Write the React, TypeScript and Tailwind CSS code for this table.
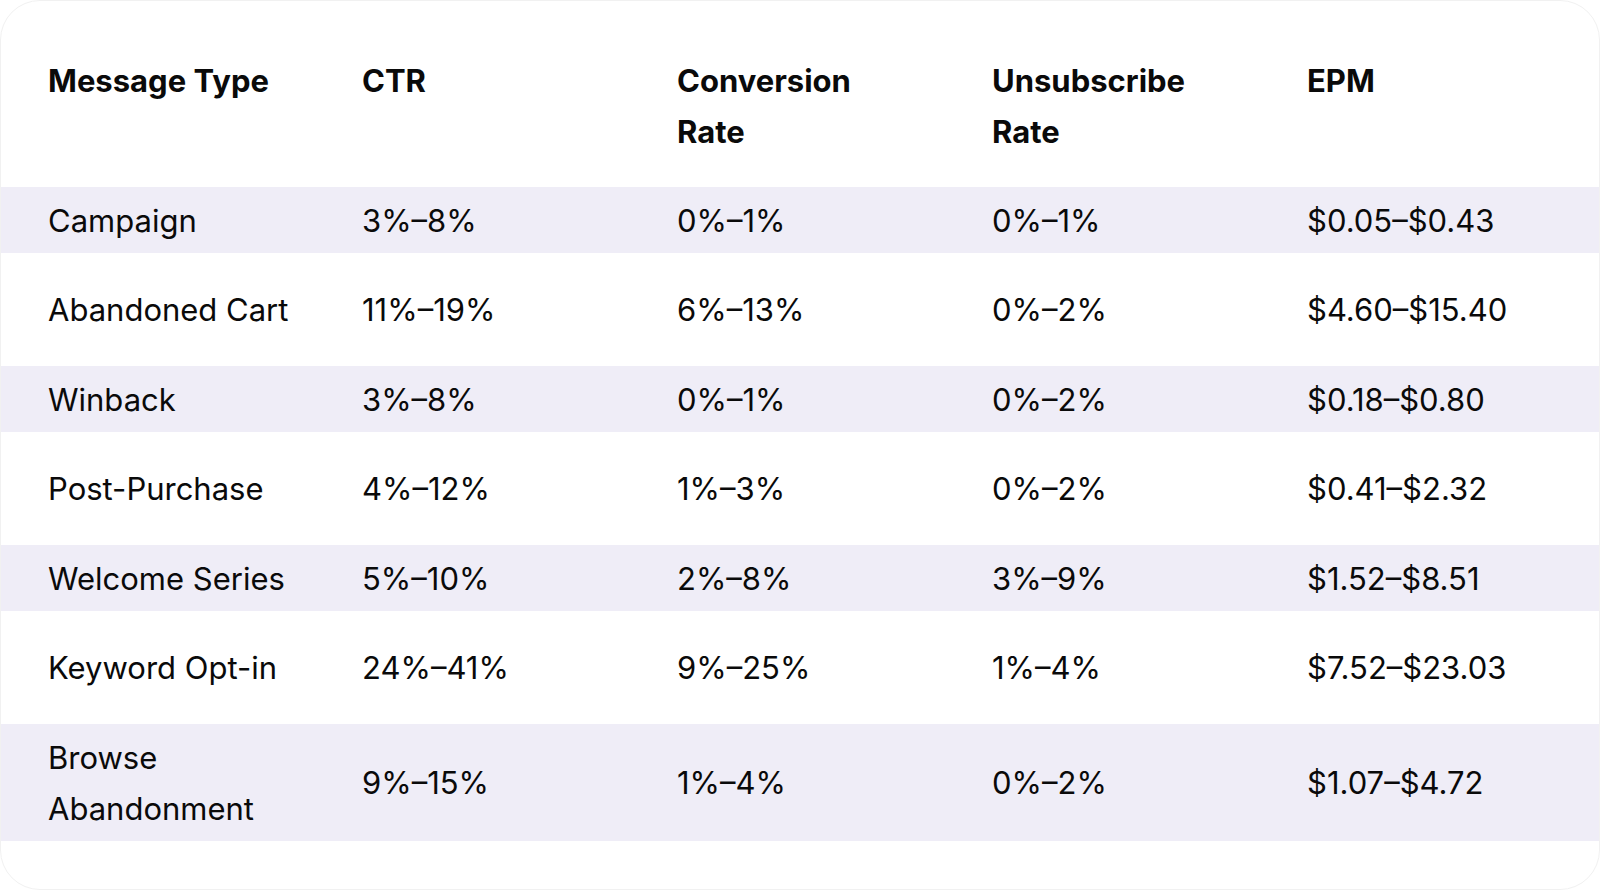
const rows = [
  ['Campaign', '3%–8%', '0%–1%', '0%–1%', '$0.05–$0.43'],
  ['Abandoned Cart', '11%–19%', '6%–13%', '0%–2%', '$4.60–$15.40'],
  ['Winback', '3%–8%', '0%–1%', '0%–2%', '$0.18–$0.80'],
  ['Post-Purchase', '4%–12%', '1%–3%', '0%–2%', '$0.41–$2.32'],
  ['Welcome Series', '5%–10%', '2%–8%', '3%–9%', '$1.52–$8.51'],
  ['Keyword Opt-in', '24%–41%', '9%–25%', '1%–4%', '$7.52–$23.03'],
  ['Browse Abandonment', '9%–15%', '1%–4%', '0%–2%', '$1.07–$4.72'],
]

const headers = ['Message Type', 'CTR', 'Conversion Rate', 'Unsubscribe Rate', 'EPM']

export default function App() {
  return (
    <div
      className="w-[1600px] h-[890px] bg-white text-[#0a0a0a]"
      style={{ fontFamily: 'Inter, "Noto Sans", sans-serif' }}
    >
      <div className="h-full rounded-[40px] border border-[#f1f1f1] overflow-hidden bg-white">

        {/* ── Header ───────────────────────────────────── */}
        <div className="grid grid-cols-[314px_315px_315px_315px_1fr] pl-[47px] pt-[54px] h-[186px] text-[31px] leading-[51px] font-bold">
          {headers.map((h) => (
            <div key={h} className="w-[244px]">{h}</div>
          ))}
        </div>

        {/* ── Body ─────────────────────────────────────── */}
        {rows.map((r, i) => {
          const shaded = i % 2 === 0
          const last = i === rows.length - 1
          return (
            <div
              key={r[0]}
              className={`grid grid-cols-[314px_315px_315px_315px_1fr] pl-[47px] items-center text-[31px] leading-[51px] ${
                shaded ? 'bg-[#efedf7]' : 'bg-white'
              } ${last ? 'h-[117px]' : shaded ? 'h-[66px]' : 'h-[113px]'}`}
            >
              {r.map((c, j) => (
                <div key={j} className="w-[244px]">{c}</div>
              ))}
            </div>
          )
        })}
      </div>
    </div>
  )
}
